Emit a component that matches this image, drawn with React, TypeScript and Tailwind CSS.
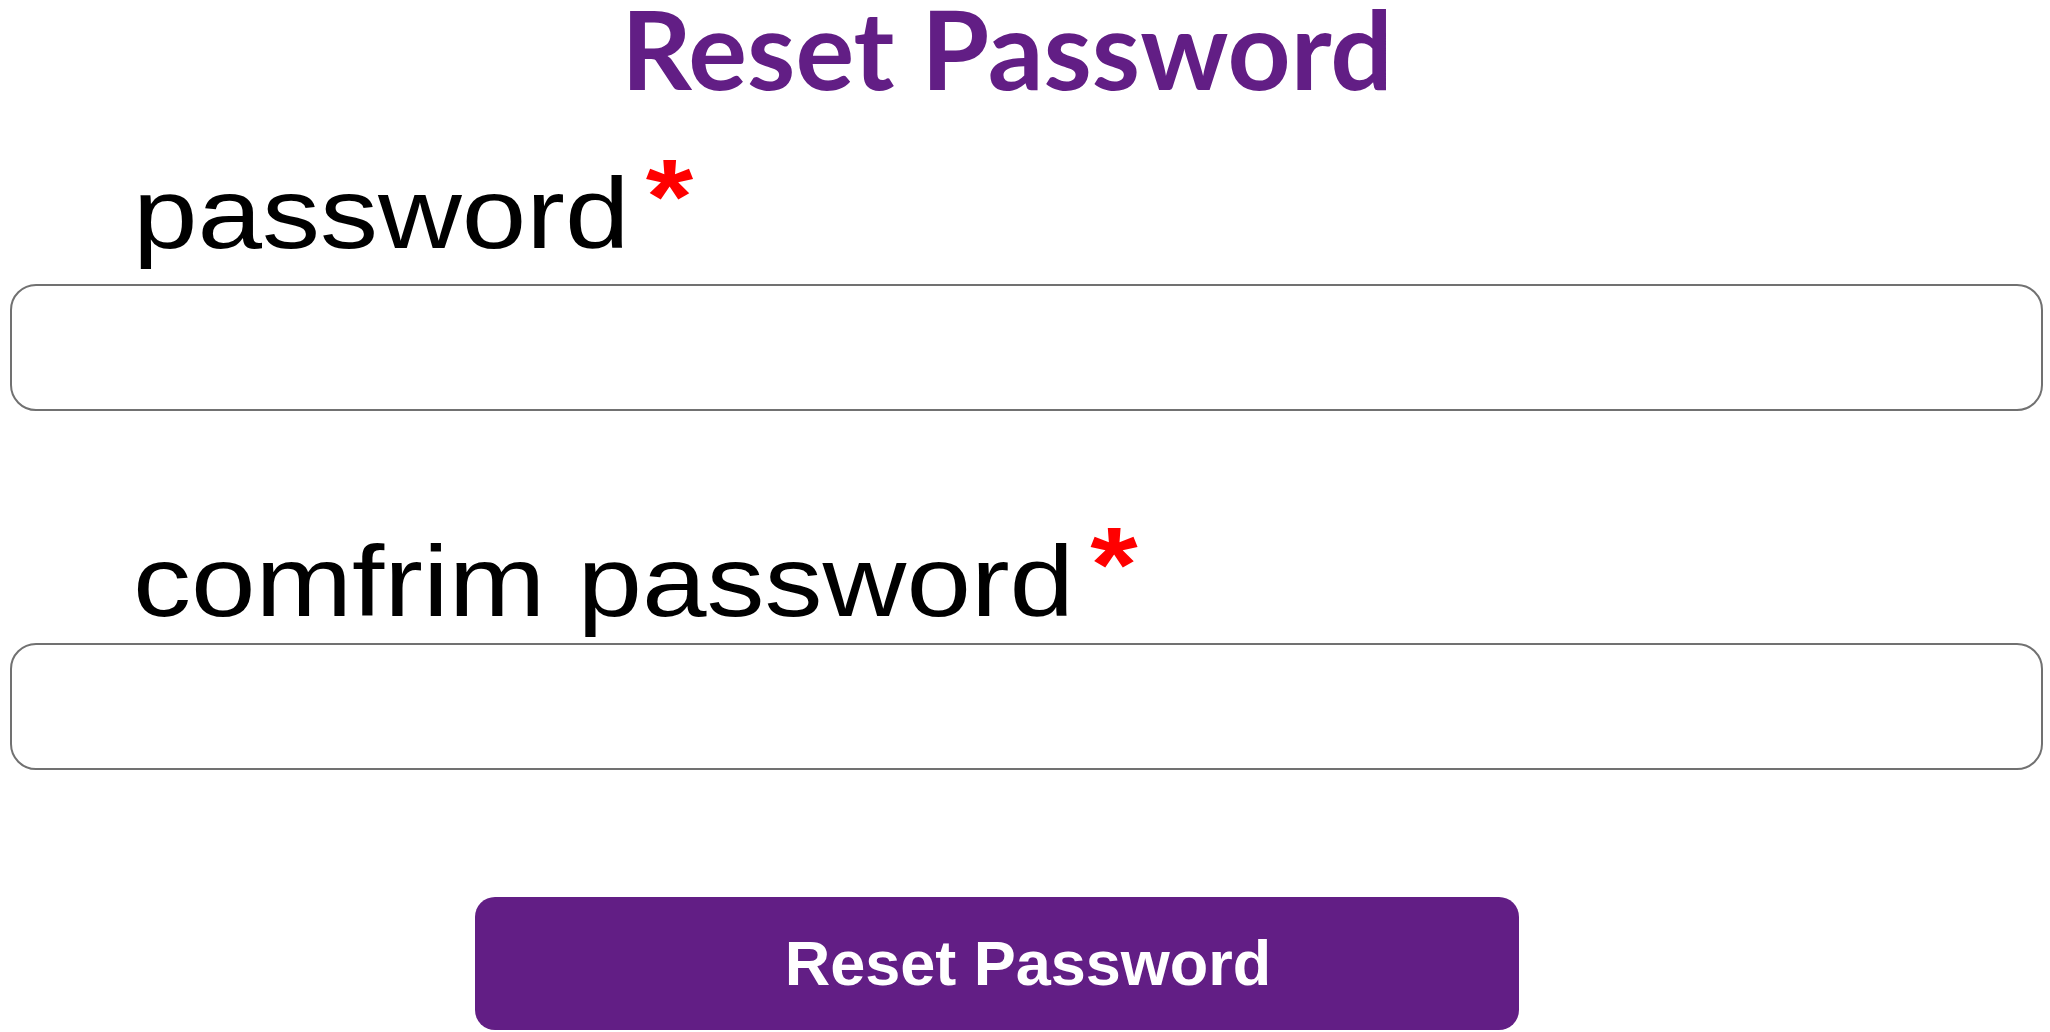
import { useState } from "react";

type FieldProps = {
  label: string;
  value: string;
  onChange: (value: string) => void;
  labelClassName: string;
  inputClassName: string;
};

const Field = ({ label, value, onChange, labelClassName, inputClassName }: FieldProps) => (
  <>
    <label
      className={`flex w-fit origin-left scale-x-[1.16] items-start pl-[106px] font-['Liberation_Sans',Arial,sans-serif] text-[100px] leading-none text-black ${labelClassName}`}
    >
      <span>{label}</span>
      <span className="ml-[14px] mt-[-19px] text-[105px] font-bold leading-none text-[#ff0000]">*</span>
    </label>
    <input
      className={`block h-[127px] w-[2033px] rounded-[26px] border-2 border-[#717171] bg-white px-6 font-['Liberation_Sans',Arial,sans-serif] text-4xl outline-none ${inputClassName}`}
      onChange={(event) => onChange(event.target.value)}
      type="password"
      value={value}
    />
  </>
);

const App = () => {
  const [password, setPassword] = useState("");
  const [confirmPassword, setConfirmPassword] = useState("");

  return (
    <div className="h-[1032px] w-[2050px] overflow-hidden bg-white pl-[10px]">
      <h1 className="mt-[-8px] h-[107px] pr-[46px] text-center font-['Lato',sans-serif] text-[110px] font-bold leading-none text-[#621e85]">
        Reset Password
      </h1>
      <form
        className="flex flex-col"
        onSubmit={(event) => {
          event.preventDefault();
        }}
      >
        <Field
          inputClassName="mt-[21px]"
          label="password"
          labelClassName="mt-[64px]"
          onChange={setPassword}
          value={password}
        />
        <Field
          inputClassName="mt-[12px]"
          label="comfrim password"
          labelClassName="mt-[120px]"
          onChange={setConfirmPassword}
          value={confirmPassword}
        />
        <button
          className="ml-[465px] mt-[127px] h-[133px] w-[1044px] rounded-[20px] bg-[#621e85] pl-[62px] text-center font-['Liberation_Sans',Arial,sans-serif] text-[63px] font-bold text-white"
          type="submit"
        >
          Reset Password
        </button>
      </form>
    </div>
  );
};

export default App;
